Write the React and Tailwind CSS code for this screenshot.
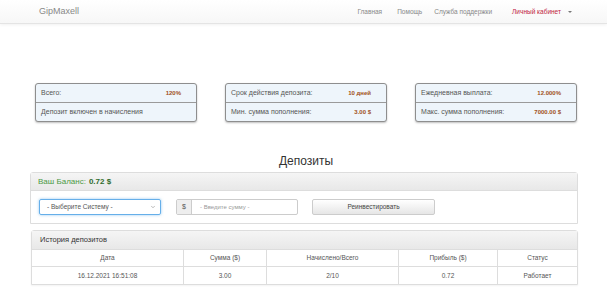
import { ChevronDown } from 'lucide-react';

const boxes = [
  [['Всего:', '120%'], ['Депозит включен в начисления', '']],
  [['Срок действия депозита:', '10 дней'], ['Мин. сумма пополнения:', '3.00 $']],
  [['Ежедневная выплата:', '12.000%'], ['Макс. сумма пополнения:', '7000.00 $']],
];

const cols = [
  ['Дата', 'w-[152px]', '16.12.2021 16:51:08'],
  ['Сумма ($)', 'w-[83px]', '3.00'],
  ['Начислено/Всего', 'w-[132px]', '2/10'],
  ['Прибыль ($)', 'w-[99px]', '0.72'],
  ['Статус', 'flex-1', 'Работает'],
];

function InfoBox({ rows }) {
  return (
    <div className="w-[162px] h-[39px] border-[1.5px] border-[#8e8e8e] rounded-[3px] bg-[#eef5fb] shadow-[0_1px_2px_rgba(0,0,0,0.25)] flex flex-col overflow-hidden">
      {rows.map(([label, value], i) => (
        <div
          key={i}
          className={`flex-1 flex items-center justify-between pl-[5px] pr-[15px] ${i === 0 ? 'border-b border-[#9a9a9a]' : ''}`}
        >
          <span className="text-[7px] text-[#555]">{label}</span>
          <span className="text-[6px] font-bold text-[#a0501a]">{value}</span>
        </div>
      ))}
    </div>
  );
}

export default function App() {
  return (
    <div className="w-[607px] h-[307px] overflow-hidden bg-white text-[#333]" style={{ fontFamily: '"Liberation Sans", Arial, sans-serif' }}>
      <nav className="h-[24px] flex items-center border-b border-[#e4e4e4] bg-gradient-to-b from-white to-[#f7f7f7] shadow-[0_1px_3px_rgba(0,0,0,0.06)]">
        <span className="ml-[39px] text-[9px] text-[#888]">GipMaxell</span>
        <div className="ml-auto mr-[35px] flex items-center text-[6.5px] text-[#888]">
          <span>Главная</span>
          <span className="ml-[15px]">Помощь</span>
          <span className="ml-[12px]">Служба поддержки</span>
          <span className="ml-[20px] text-[#c0243e]">Личный кабинет</span>
          <span className="ml-[7px] w-0 h-0 border-l-[2px] border-r-[2px] border-t-[2px] border-l-transparent border-r-transparent border-t-[#777]"></span>
        </div>
      </nav>

      <div className="mt-[59px] ml-[35px] flex gap-[28px]">
        {boxes.map((rows, i) => (
          <InfoBox key={i} rows={rows} />
        ))}
      </div>

      <h2 className="mt-[32px] text-center text-[12px] leading-[14px] ml-[5px] text-[#333]">Депозиты</h2>

      <div className="mt-[4px] ml-[30px] w-[548px] border border-[#ddd] rounded-t-[3px]">
        <div className="h-[18px] flex items-center pl-[7px] bg-gradient-to-b from-[#f5f5f5] to-[#e8e8e8] border-b border-[#ddd] text-[8px] text-[#4a9a45]">
          Ваш Баланс:<span className="ml-[3px] font-bold text-[#2f6b2c]">0.72 $</span>
        </div>
        <div className="h-[32px] flex items-center pl-[8px]">
          <div className="w-[122px] h-[16px] border border-[#66afe9] rounded-[2px] shadow-[0_0_3px_rgba(102,175,233,0.7)] flex items-center justify-between pl-[7px] pr-[4px] text-[6.5px] text-[#555]">
            <span>- Выберите Систему -</span>
            <ChevronDown size={6} strokeWidth={2} color="#777" />
          </div>
          <div className="ml-[15px] w-[122px] h-[16px] flex border border-[#ccc] rounded-[2px]">
            <div className="w-[15px] bg-[#eee] border-r border-[#ccc] flex items-center justify-center text-[7px] text-[#555]">$</div>
            <div className="flex-1 flex items-center pl-[8px] text-[6px] text-[#999]">- Введите сумму -</div>
          </div>
          <div className="ml-[14px] w-[123px] h-[16px] border border-[#ccc] rounded-[2px] bg-gradient-to-b from-white to-[#e6e6e6] flex items-center justify-center text-[6.5px] text-[#444]">
            Реинвестировать
          </div>
        </div>
      </div>

      <div className="mt-[6px] ml-[31px] w-[547px] border border-[#ddd] rounded-t-[3px] shadow-[0_1px_2px_rgba(0,0,0,0.05)]">
        <div className="h-[19px] flex items-center pl-[8px] bg-gradient-to-b from-[#f5f5f5] to-[#e8e8e8] border-b border-[#ddd] text-[7.5px] text-[#333]">
          История депозитов
        </div>
        <div className="flex h-[17px] border-b border-[#ddd]">
          {cols.map(([h, w], i) => (
            <div key={i} className={`${w} flex items-center justify-center text-[6.5px] text-[#555] ${i < 4 ? 'border-r border-[#ddd]' : ''}`}>
              {h}
            </div>
          ))}
        </div>
        <div className="flex h-[17px]">
          {cols.map(([, w, v], i) => (
            <div key={i} className={`${w} flex items-center justify-center text-[6.5px] text-[#555] ${i < 4 ? 'border-r border-[#ddd]' : ''}`}>
              {v}
            </div>
          ))}
        </div>
      </div>
    </div>
  );
}
